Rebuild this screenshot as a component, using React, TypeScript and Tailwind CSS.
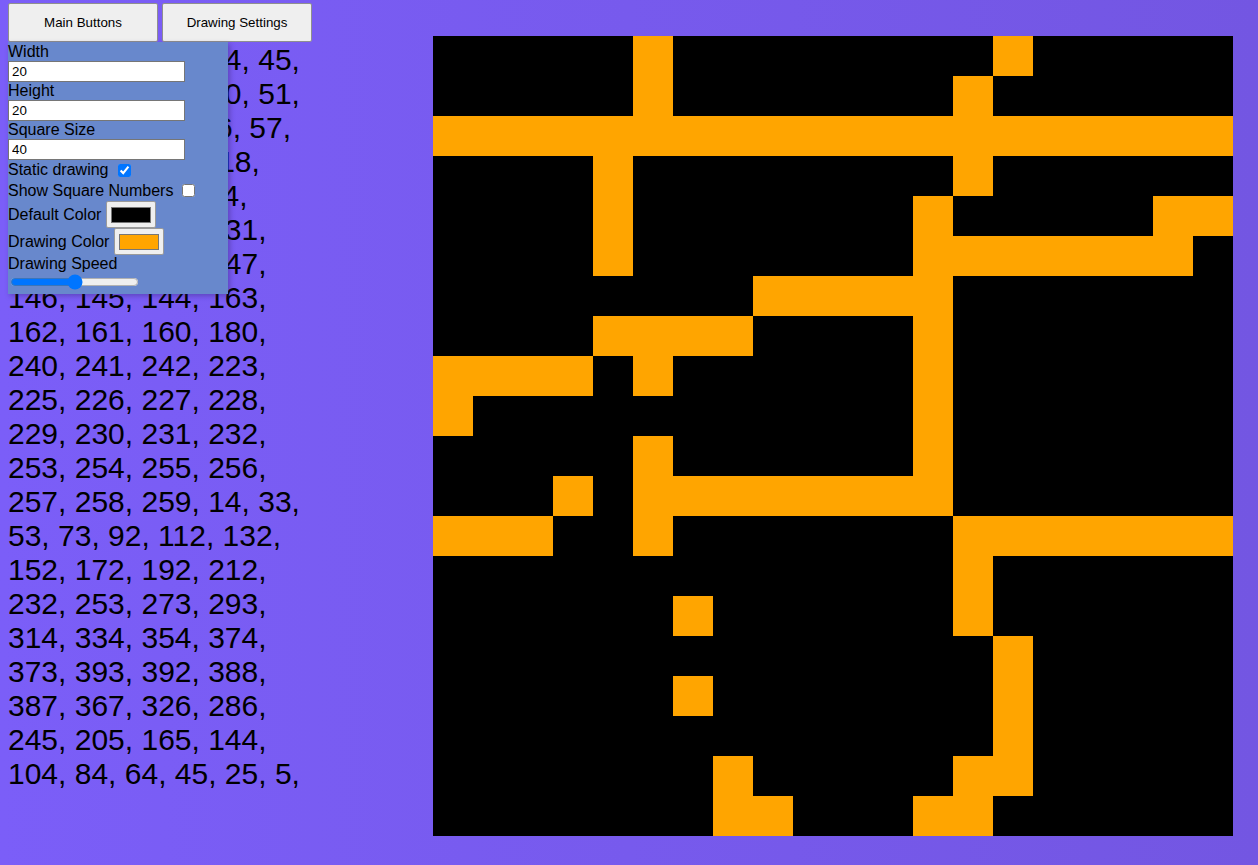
const GRID = [
  ".....#........#.....",
  ".....#.......#......",
  "####################",
  "....#........#......",
  "....#.......#.....##",
  "....#.......#######.",
  "........#####.......",
  "....####....#.......",
  "####.#......#.......",
  "#...........#.......",
  ".....#......#.......",
  "...#.########.......",
  "###..#.......#######",
  ".............#......",
  "......#......#......",
  "..............#.....",
  "......#.......#.....",
  "..............#.....",
  ".......#.....##.....",
  ".......##...##......",
];

const PATH_LINES = [
  "126, 106, 105, 84, 45,",
  "127, 128, 129, 70, 51,",
  "111, 112, 113, 76, 57,",
  "116, 117, 137, 118,",
  "119, 99, 79, 59, 4,",
  "150, 151, 152, 131,",
  "128, 129, 130, 147,",
  "146, 145, 144, 163,",
  "162, 161, 160, 180,",
  "240, 241, 242, 223,",
  "225, 226, 227, 228,",
  "229, 230, 231, 232,",
  "253, 254, 255, 256,",
  "257, 258, 259, 14, 33,",
  "53, 73, 92, 112, 132,",
  "152, 172, 192, 212,",
  "232, 253, 273, 293,",
  "314, 334, 354, 374,",
  "373, 393, 392, 388,",
  "387, 367, 326, 286,",
  "245, 205, 165, 144,",
  "104, 84, 64, 45, 25, 5,",
];

function Swatch({ color }: { color: string }) {
  return (
    <span className="inline-flex h-[27px] w-[50px] items-center justify-center rounded-[2px] border border-[#9a9a9a] bg-[#efefef]">
      <span className="block h-[16px] w-[40px] border border-[#777]" style={{ backgroundColor: color }} />
    </span>
  );
}

function SettingsPanel() {
  return (
    <div className="absolute left-2 top-[42px] h-[252px] w-[220px] bg-[#6888cc] pt-[1px] text-[16px] leading-[18px] text-black shadow-[2px_2px_5px_rgba(40,20,90,0.35)]">
      <div>Width</div>
      <input
        type="text"
        defaultValue="20"
        className="block h-[21px] w-[177px] border border-[#767676] bg-white px-[3px] text-[13.33px] leading-[17px]"
      />
      <div>Height</div>
      <input
        type="text"
        defaultValue="20"
        className="block h-[21px] w-[177px] border border-[#767676] bg-white px-[3px] text-[13.33px] leading-[17px]"
      />
      <div>Square Size</div>
      <input
        type="text"
        defaultValue="40"
        className="block h-[21px] w-[177px] border border-[#767676] bg-white px-[3px] text-[13.33px] leading-[17px]"
      />
      <div className="flex h-[20px] items-center">
        <span>Static drawing</span>
        <input type="checkbox" defaultChecked className="ml-[9px] h-[13px] w-[13px]" />
      </div>
      <div className="flex h-[21px] items-center">
        <span>Show Square Numbers</span>
        <input type="checkbox" className="ml-[9px] h-[13px] w-[13px]" />
      </div>
      <div className="flex h-[27px] items-center gap-[5px]">
        <span>Default Color</span>
        <Swatch color="#000000" />
      </div>
      <div className="flex h-[27px] items-center gap-[5px]">
        <span>Drawing Color</span>
        <Swatch color="#ffa500" />
      </div>
      <div>Drawing Speed</div>
      <input type="range" defaultValue={50} className="mx-[2px] mt-[1px] w-[129px]" />
    </div>
  );
}

export default function App() {
  return (
    <div
      className="flex min-h-screen bg-linear-to-r from-[#7b5ef8] to-[#7356e2]"
      style={{ fontFamily: '"Liberation Sans", Arial, sans-serif' }}
    >
      {/* left column: menu buttons + visited squares */}
      <div className="relative w-[433px] shrink-0 pl-2 pt-[3px]">
        <div className="flex gap-[4px]">
          <button className="h-[39px] w-[150px] rounded-[2px] border border-[#8f8f8f] bg-[#efefef] text-[13.33px] text-black">
            Main Buttons
          </button>
          <button className="h-[39px] w-[150px] rounded-[2px] border border-[#8f8f8f] bg-[#efefef] text-[13.33px] text-black">
            Drawing Settings
          </button>
        </div>
        <div className="mt-[1px] text-[30px] leading-[34px] text-black">
          {PATH_LINES.map((line, i) => (
            <div key={i} className="whitespace-pre">
              {line}
            </div>
          ))}
        </div>
        <SettingsPanel />
      </div>

      {/* drawing grid */}
      <div className="pt-[36px]">
        <div className="grid w-[800px] grid-cols-[repeat(20,40px)]">
          {GRID.map((row, r) =>
            row.split("").map((c, col) => (
              <div
                key={r + "-" + col}
                className={c === "#" ? "h-[40px] w-[40px] bg-[#ffa500]" : "h-[40px] w-[40px] bg-black"}
              />
            ))
          )}
        </div>
      </div>
    </div>
  );
}
